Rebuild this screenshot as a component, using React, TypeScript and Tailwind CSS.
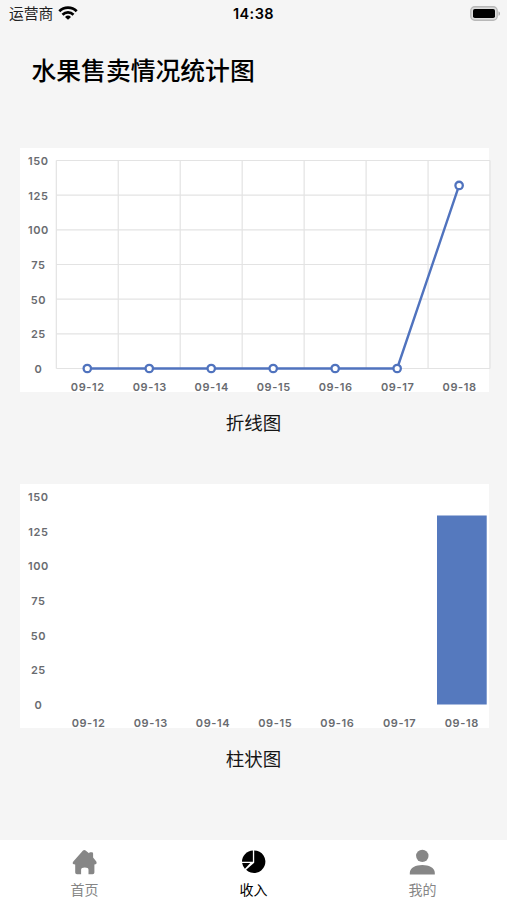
import type { ReactNode } from 'react';

const days = ['09-12', '09-13', '09-14', '09-15', '09-16', '09-17', '09-18'];
const income = [0, 0, 0, 0, 0, 0, 132];
const ticks = [150, 125, 100, 75, 50, 25, 0];

const TOP = 12.5;
const BOTTOM = 220.5;
const toY = (value: number) => BOTTOM - (value / 150) * (BOTTOM - TOP);

function StatusBar() {
  return (
    <header className="grid h-7 grid-cols-3 items-center">
      <div className="flex items-center gap-[5px] pl-[9px]">
        <span className="text-[14.8px] leading-none text-[#222]">运营商</span>
        <svg width="20" height="14" viewBox="0 0 20 14" fill="none" stroke="#000" strokeWidth="2.7" className="-mt-0.5">
          <path d="M1.3 5.3a12.3 12.3 0 0 1 17.4 0" />
          <path d="M4.5 8.7a7.8 7.8 0 0 1 11 0" />
          <path d="M10 13.8 7 10.9a4.3 4.3 0 0 1 6 0Z" fill="#000" stroke="none" />
        </svg>
      </div>
      <span className="text-center text-[14.5px] leading-none font-semibold tracking-[0.45px]">14:38</span>
      <div className="-mt-0.5 flex justify-end pr-[6px]">
        <svg width="31" height="15" viewBox="0 0 31 15">
          <rect x="0.8" y="0.8" width="26.4" height="13.4" rx="4" fill="#ddd" stroke="#b8b8b8" strokeWidth="1.4" />
          <rect x="3" y="3" width="22" height="9" rx="1.8" fill="#000" />
          <path d="M28.5 5.2c2 .8 2 3.8 0 4.6Z" fill="#aaa" />
        </svg>
      </div>
    </header>
  );
}

function AxisLabels({ start, step }: { start: number; step: number }) {
  return (
    <g fill="#696b70" fontSize="11" fontWeight="600" letterSpacing="0.6" textAnchor="middle">
      {ticks.map((tick) => (
        <text key={tick} x="18.4" y={toY(tick) + 4.4}>
          {tick}
        </text>
      ))}
      {days.map((day, i) => (
        <text key={day} x={start + i * step} y="243.3">
          {day}
        </text>
      ))}
    </g>
  );
}

function LineChart() {
  const points = income.map((value, i) => ({ x: 67.3 + i * 61.97, y: toY(value) }));
  return (
    <svg width="469" height="244" viewBox="0 0 469 244" className="block overflow-visible bg-white">
      <g stroke="#e3e3e3" strokeWidth="1.2">
        {ticks.map((tick) => (
          <path key={tick} d={`M36.3 ${toY(tick)}H470`} />
        ))}
        {Array.from({ length: 8 }, (_, i) => (
          <path key={i} d={`M${36.3 + i * 61.96} ${TOP}V${BOTTOM}`} />
        ))}
      </g>
      <polyline points={points.map((p) => `${p.x},${p.y}`).join(' ')} fill="none" stroke="#5073be" strokeWidth="2.4" />
      {points.map((p) => (
        <circle key={p.x} cx={p.x} cy={p.y} r="3.7" fill="#fff" stroke="#5073be" strokeWidth="2.3" />
      ))}
      <AxisLabels start={67.8} step={61.97} />
    </svg>
  );
}

function BarChart() {
  return (
    <svg width="469" height="244" viewBox="0 0 469 244" className="block overflow-visible bg-white">
      <rect x="417" y="31.5" width="49.7" height="189" fill="#5579be" />
      <AxisLabels start={68.6} step={62.2} />
    </svg>
  );
}

function ChartSection({ caption, children }: { caption: string; children: ReactNode }) {
  return (
    <section className="h-[336px] pl-5">
      {children}
      <p className="mt-[18px] mr-5 text-center text-[18.5px] leading-[27px] text-[#161616]">{caption}</p>
    </section>
  );
}

function TabItem({ label, active, children }: { label: string; active?: boolean; children: ReactNode }) {
  return (
    <div className={active ? 'flex flex-col items-center text-black' : 'flex flex-col items-center text-[#868686]'}>
      <svg width="28" height="28" viewBox="0 0 28 28" fill="currentColor" className="mr-px">
        {children}
      </svg>
      <span className="mt-1 text-[14px] leading-5">{label}</span>
    </div>
  );
}

export default function App() {
  return (
    <div className="flex h-[900px] w-[507px] flex-col overflow-hidden bg-[#f5f5f5] font-['Inter','Noto_Sans_CJK_SC',sans-serif] text-black">
      <StatusBar />
      <h1 className="mt-[25px] pl-[31.5px] text-[24.8px] leading-9 font-medium">水果售卖情况统计图</h1>
      <main className="mt-[59px] flex-1">
        <ChartSection caption="折线图">
          <LineChart />
        </ChartSection>
        <ChartSection caption="柱状图">
          <BarChart />
        </ChartSection>
      </main>
      <nav className="grid h-[60px] grid-cols-3 bg-white pt-2">
        <TabItem label="首页">
          <path d="M13 2.5q1.3-1 2.6 0l3.4 2.7q.2-1 1.3-1h1.6q1.2 0 1.2 1.2v4.2l3.2 4q1.2 2-.7 2.7l-1.2.1v8q0 1.8-1.8 1.8h-4.1v-4.4q0-2.4-3.7-2.4t-3.7 2.4v4.4H7q-1.8 0-1.8-1.8v-8l-1.3-.1q-2.1-.7-.6-2.9Z" />
        </TabItem>
        <TabItem label="收入" active>
          <path d="M13.9 2.5v11.2H3A11.2 11.2 0 0 1 13.9 2.5Z" />
          <path d="M3.1 15h8.2l-5.4 5.7A11 11 0 0 1 3.1 15Z" />
          <path d="M15.2 2.4a11.3 11.3 0 1 1-8.1 19.3l8.1-7Z" />
        </TabItem>
        <TabItem label="我的">
          <circle cx="14.3" cy="7.9" r="6.2" />
          <path d="M1.8 26.5v-1.8c0-5 6.2-7.7 12.5-7.7s12.5 2.7 12.5 7.7v1.8Z" />
        </TabItem>
      </nav>
    </div>
  );
}
